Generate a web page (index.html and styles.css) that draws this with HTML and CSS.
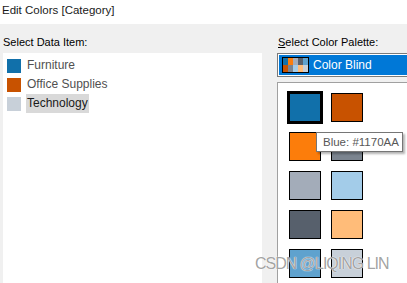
FILE: index.html
```html
<!DOCTYPE html>
<html lang="en">
<head>
  <meta charset="UTF-8" />
  <title>Edit Colors [Category]</title>
  <link rel="stylesheet" href="styles.css">
</head>
<body>

  <div class="title">Edit Colors [Category]</div>

  <div class="main">
    <!-- data items -->
    <div class="left">
      <div class="label">Select Data Item:</div>
      <ul class="items">
        <li><span class="sw c-blue"></span><span class="name">Furniture</span></li>
        <li><span class="sw c-rust"></span><span class="name">Office Supplies</span></li>
        <li class="selected"><span class="sw c-silver"></span><span class="name">Technology</span></li>
      </ul>
    </div>

    <!-- palette -->
    <div class="right">
      <div class="label"><u>S</u>elect Color Palette:</div>
      <div class="select">
        <span class="pal-icon">
          <i class="c-blue"></i><i class="c-orange"></i><i class="c-grey"></i><i class="c-slate"></i><i class="c-sky"></i>
          <i class="c-rust"></i><i class="c-steel"></i><i class="c-ice"></i><i class="c-peach"></i><i class="c-silver"></i>
        </span>
        <span class="select-text">Color Blind</span>
      </div>
      <div class="palette">
        <div class="swatches">
          <span class="swatch c-blue active"></span>
          <span class="swatch c-rust"></span>
          <span class="swatch c-orange"></span>
          <span class="swatch c-steel"></span>
          <span class="swatch c-grey"></span>
          <span class="swatch c-ice"></span>
          <span class="swatch c-slate"></span>
          <span class="swatch c-peach"></span>
          <span class="swatch c-sky"></span>
          <span class="swatch c-silver"></span>
        </div>
      </div>
    </div>

    <div class="tooltip">Blue: #1170AA</div>
  </div>

  <div class="watermark">CSDN @LIQING LIN</div>

</body>
</html>
```

FILE: styles.css
```css
* {
  box-sizing: border-box;
}

body {
  margin: 0;
  width: 407px;
  height: 283px;
  overflow: hidden;
  font-family: 'Liberation Sans', Arial, sans-serif;
  font-size: 11px;
  color: #000;
  background: #fff;
  position: relative;
}

.title {
  height: 24px;
  padding: 2px 0 0 2px;
  font-size: 11.5px;
  line-height: 16px;
  color: #1a1a1a;
  background: #fff;
}

.main {
  position: relative;
  display: flex;
  height: 259px;
  background: #f0f0f0;
}

.label {
  margin-top: 12px;
  height: 17px;
  line-height: 13px;
}

/* left column */
.left {
  display: flex;
  flex-direction: column;
  width: 259px;
  margin-left: 3px;
}

.items {
  flex: 1;
  list-style: none;
  margin: 0;
  padding: 3px 0 0 4px;
  background: #fff;
}

.items li {
  display: flex;
  align-items: center;
  height: 19px;
  gap: 5px;
}

.sw {
  width: 14px;
  height: 14px;
}

.name {
  height: 19px;
  line-height: 19px;
  padding: 0 1px;
  color: #505050;
  font-size: 12px;
}

.items li.selected .name {
  background: #d9d9d9;
  color: #1a1a1a;
}

/* right column */
.right {
  display: flex;
  flex-direction: column;
  flex: 1;
  margin-left: 15px;
  min-width: 0;
}

.right .label {
  padding-left: 1px;
}

.select {
  display: flex;
  align-items: center;
  gap: 4px;
  height: 24px;
  width: 140px;
  border: 1px solid #7a7a7a;
  border-right: none;
  padding: 1px 0 1px 1px;
  background: #0078d7;
  background-clip: content-box;
  box-shadow: inset 0 0 0 1px #fff;
  color: #fff;
  font-size: 12px;
}

.pal-icon {
  display: grid;
  grid-template-columns: repeat(5, 5px);
  grid-template-rows: repeat(2, 7px);
  margin-left: 3px;
  border: 1px solid #000;
}

.pal-icon i {
  display: block;
}

.palette {
  flex: 1;
  margin-top: 5px;
  width: 140px;
  background: #fff;
  border-top: 1px solid #a0a0a0;
  border-left: 1px solid #a0a0a0;
  padding: 10px 0 0 11px;
}

.swatches {
  display: grid;
  grid-template-columns: repeat(2, 32px);
  grid-auto-rows: 29px;
  column-gap: 10px;
  row-gap: 10px;
}

.swatch {
  border: 1px solid #000;
}

.swatch.active {
  outline: 2px solid #000;
}

/* colours */
.c-blue { background: #1170aa; }
.c-orange { background: #fc7d0b; }
.c-grey { background: #a3acb9; }
.c-slate { background: #57606c; }
.c-sky { background: #5fa2ce; }
.c-rust { background: #c85200; }
.c-steel { background: #7b848f; }
.c-ice { background: #a3cce9; }
.c-peach { background: #ffbc79; }
.c-silver { background: #c8d0d9; }

/* overlays */
.tooltip {
  position: absolute;
  left: 316px;
  top: 108px;
  width: 87px;
  height: 20px;
  padding-left: 6px;
  line-height: 18px;
  font-size: 11.5px;
  color: #575757;
  background: #fff;
  border: 1px solid #767676;
  box-shadow: 2px 2px 2px rgba(0, 0, 0, 0.3);
}

.watermark {
  position: absolute;
  left: 255px;
  top: 255px;
  font-size: 16px;
  letter-spacing: -1px;
  color: rgba(110, 110, 110, 0.65);
  text-shadow: 0 0 1px #fff, 0 0 1px #fff;
  white-space: nowrap;
}
```
